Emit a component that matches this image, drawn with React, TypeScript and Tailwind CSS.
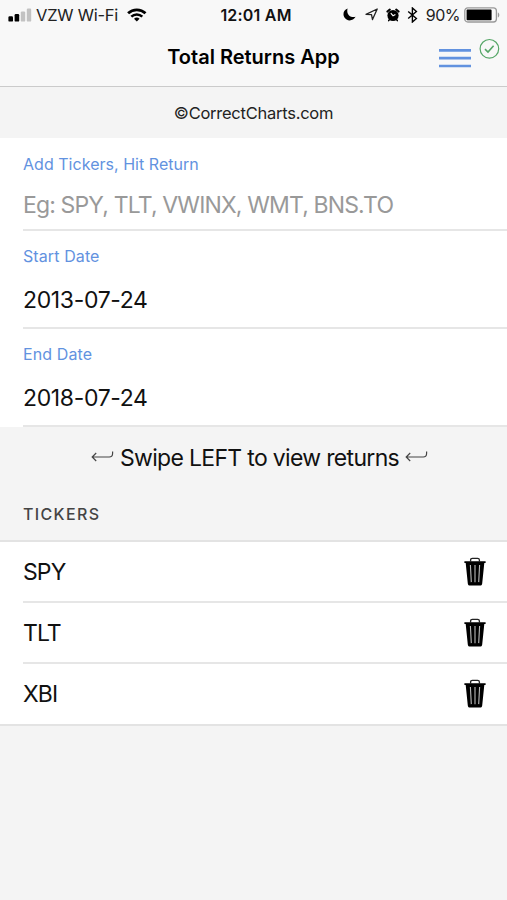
import { useState } from 'react';

const FIELDS = [
  { label: 'Start Date', value: '2013-07-24' },
  { label: 'End Date', value: '2018-07-24' },
];

// --- Icons ---
const SignalIcon = () => (
  <svg width="24" height="14" viewBox="0 0 24 14" className="shrink-0">
    <rect x="0.4" y="8.2" width="4.6" height="5.4" rx="1.2" fill="#000" />
    <rect x="6.6" y="6" width="4.6" height="7.6" rx="1.2" fill="#000" />
    <rect x="12.8" y="3.4" width="4.4" height="10.2" rx="1.2" fill="#c2c2c2" />
    <rect x="18.8" y="0.6" width="4.4" height="13" rx="1.2" fill="#c2c2c2" />
  </svg>
);

const WifiIcon = () => (
  <svg width="20" height="14" viewBox="0 0 20 14" fill="none" stroke="#000" className="shrink-0">
    <path d="M1.1 5.3a12.6 12.6 0 0 1 17.4 0" strokeWidth="2.8" />
    <path d="M4.3 8.6a8 8 0 0 1 11 0" strokeWidth="2.5" />
    <path d="M9.8 13.4 7 10.8a4 4 0 0 1 5.6 0z" fill="#000" stroke="none" />
  </svg>
);

const MoonIcon = () => (
  <svg width="13" height="13" viewBox="0 0 13 13" className="shrink-0">
    <path d="M4.6.6C.6 1.9-.5 6.2 1.3 9.3c2.4 4.2 8.7 4.2 11.3-.5C7.600 10.300 2.900 6.200 4.600.6z" fill="#000" />
  </svg>
);

const LocationIcon = () => (
  <svg width="13" height="13" viewBox="0 0 13 13" className="shrink-0">
    <path d="M12.2 1 1 6.3l5.5.4 1 4.9z" fill="none" stroke="#222" strokeWidth="1.3" strokeLinejoin="round" />
  </svg>
);

const AlarmIcon = () => (
  <svg width="14" height="14" viewBox="0 0 14 14" className="shrink-0">
    <circle cx="7" cy="7.5" r="5.6" fill="#000" />
    <path d="M1.4 3.6 3.8 1.6M12.6 3.6 10.2 1.6" stroke="#000" strokeWidth="2" strokeLinecap="round" />
    <path d="M3.6 11.6l-.9 1M10.4 11.6l.9 1" stroke="#000" strokeWidth="1.5" strokeLinecap="round" />
    <path d="M4.8 5.2 7 7.7l2.4-1.3" fill="none" stroke="#fff" strokeWidth="1.1" />
  </svg>
);

const BluetoothIcon = () => (
  <svg width="11" height="16" viewBox="0 0 11 16" className="shrink-0">
    <path d="m1.2 4.5 8.2 7L5.4 15V1l4 3.5-8.2 7" fill="none" stroke="#000" strokeWidth="1.4" />
  </svg>
);

const BatteryIcon = () => (
  <svg width="37" height="16" viewBox="0 0 37 16" className="shrink-0">
    <rect x="0.8" y="0.8" width="31.6" height="14.2" rx="3" fill="none" stroke="#999" strokeWidth="1.3" />
    <rect x="2.6" y="2.6" width="25" height="10.6" rx="0.8" fill="#000" />
    <path d="M33.8 5.4c2 .6 2 4.4 0 5z" fill="#999" />
  </svg>
);

const ReturnIcon = () => (
  <svg width="23" height="15" viewBox="0 0 23 15" fill="none" stroke="#444" strokeWidth="1.2" className="shrink-0">
    <path d="M21.6.4v1.8c0 2.6-1 3.8-3.4 3.8H1.4M5.2 2 1.2 6l4 4" />
  </svg>
);

const TrashIcon = () => (
  <svg width="22" height="29" viewBox="0 0 22 30" preserveAspectRatio="none" className="shrink-0">
    <path d="M6.6 4.6V3.1c0-1.2.6-1.8 1.8-1.8h5.2c1.2 0 1.8.6 1.8 1.8v1.5" fill="none" stroke="#222" strokeWidth="1.3" />
    <path d="M.4 4.4h21.2v1.7h-1.3l-2.1 21.2c-.2 1.6-1 2.3-2.5 2.3H6.3c-1.5 0-2.3-.7-2.5-2.3L1.7 6.1H.4z" fill="#000" />
    <path d="M6.4 8.2 7.3 26M11 8.2V26M15.6 8.2 14.7 26" stroke="#bbb" strokeWidth="1.1" />
  </svg>
);

export default function App() {
  const [tickers, setTickers] = useState(['SPY', 'TLT', 'XBI']);

  return (
    <div className="min-h-screen w-full bg-[#f4f4f4] font-['Inter',sans-serif] text-[#111] overflow-hidden">
      <header className="h-[87px] bg-[#f8f8f8] border-b border-[#cbcbcb]">
        {/* Status bar */}
        <div className="grid grid-cols-[1fr_auto_1fr] items-center h-[29px] pl-2 pr-[6px] whitespace-nowrap">
          <div className="flex items-center">
            <SignalIcon />
            <span className="ml-1 text-[16.5px] leading-5 tracking-[-0.25px] text-[#222]">VZW Wi-Fi</span>
            <span className="ml-[9px]"><WifiIcon /></span>
          </div>
          <span className="text-[16px] leading-5 font-semibold tracking-[0.2px] ml-[3px]">12:01 AM</span>
          <div className="flex items-center justify-end">
            <MoonIcon />
            <span className="ml-[9px]"><LocationIcon /></span>
            <span className="ml-2"><AlarmIcon /></span>
            <span className="ml-[7px]"><BluetoothIcon /></span>
            <span className="ml-2 text-[16px] leading-5 tracking-[-0.5px] text-[#222]">90%</span>
            <span className="ml-1"><BatteryIcon /></span>
          </div>
        </div>

        {/* Title bar */}
        <div className="relative h-[56px] flex items-center justify-center">
          <h1 className="text-[20px] font-semibold text-black">Total Returns App</h1>
          <button className="absolute right-[36px] top-[19px]">
            <svg width="32" height="21" viewBox="0 0 32 21" stroke="#6292df" strokeWidth="2.7">
              <path d="M0 2.4h32M0 10.2h32M0 18h32" />
            </svg>
          </button>
          <svg width="22" height="22" viewBox="0 0 22 22" fill="none" stroke="#56a667" className="absolute right-[7px] top-[9px]">
            <circle cx="11.4" cy="10.8" r="9.3" strokeWidth="1.2" />
            <path d="m7 11.1 3 3 5.6-6.3" strokeWidth="1.6" />
          </svg>
        </div>
      </header>

      <p className="h-[51px] pt-px flex items-center justify-center text-[16.5px] tracking-[-0.25px] text-[#222]">©CorrectCharts.com</p>

      {/* Form */}
      <section className="bg-white h-[289px] pl-[23px]">
        <div className="h-[93px] border-b-2 border-[#e6e6e6] pt-4">
          <label className="block text-[16px] leading-5 tracking-[0.03px] text-[#6292df]">Add Tickers, Hit Return</label>
          <div className="mt-[17px] text-[23px] leading-7 tracking-[-0.85px] text-[#999]">Eg: SPY, TLT, VWINX, WMT, BNS.TO</div>
        </div>
        {FIELDS.map((field) => (
          <div key={field.label} className="h-[98px] border-b-2 border-[#e6e6e6] pt-[15px]">
            <label className="block text-[16px] leading-5 tracking-[0.1px] text-[#6292df]">{field.label}</label>
            <div className="mt-5 text-[23px] leading-7 tracking-[-0.35px]">{field.value}</div>
          </div>
        ))}
      </section>

      <div className="h-[61px] pt-px flex items-center justify-center gap-[6px] pl-3 text-[23px]">
        <ReturnIcon />
        <span className="tracking-[-0.68px]">Swipe LEFT to view returns</span>
        <ReturnIcon />
      </div>

      <h2 className="h-[54px] border-b-2 border-[#e3e3e3] pl-[23px] pt-[14px] text-[16px] leading-6 font-medium tracking-[1.35px] text-[#444]">
        TICKERS
      </h2>

      {/* Ticker list */}
      <ul className="bg-white pl-[23px] border-b-2 border-[#e3e3e3]">
        {tickers.map((ticker) => (
          <li key={ticker} className="h-[61px] last:h-[60px] flex items-center justify-between pt-px pr-[21px] border-b-2 border-[#e6e6e6] last:border-b-0 text-[23px] tracking-[-0.9px]">
            {ticker}
            <button className="mb-[2px]" onClick={() => setTickers(tickers.filter((t) => t !== ticker))}>
              <TrashIcon />
            </button>
          </li>
        ))}
      </ul>
    </div>
  );
}
